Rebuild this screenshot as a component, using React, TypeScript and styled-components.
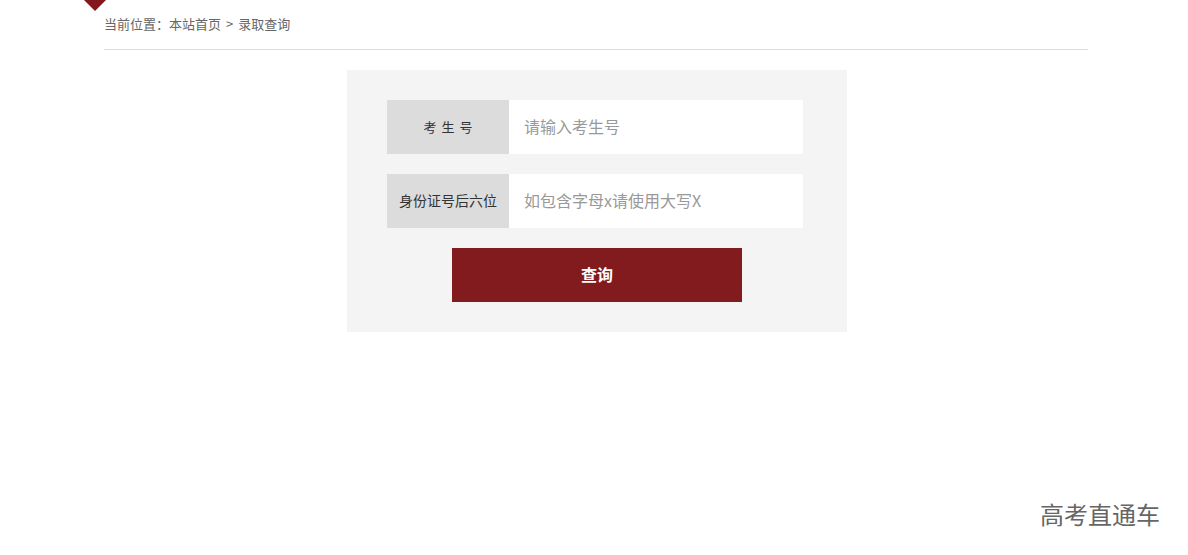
import styled, { createGlobalStyle } from "styled-components";

const GlobalStyle = createGlobalStyle`
  html, body {
    margin: 0;
    padding: 0;
    background: #fff;
    font-family: "Noto Sans CJK SC", "Noto Sans", sans-serif;
  }
`;

const Page = styled.div`
  width: 984px;
  margin-left: 104px;
  min-height: 555px;
`;

const Marker = styled.div`
  width: 0;
  height: 0;
  margin-left: -20px;
  border-left: 11px solid transparent;
  border-right: 11px solid transparent;
  border-top: 11px solid #83191c;
`;

const Crumbs = styled.div`
  height: 28px;
  line-height: 26px;
  padding-bottom: 10px;
  border-bottom: 1px solid #dddddd;
  font-size: 13px;
  color: #666;
`;

const Sep = styled.span`
  margin: 0 5px;
`;

const Panel = styled.form`
  width: 500px;
  box-sizing: border-box;
  margin: 20px 0 0 243px;
  padding: 30px 44px 30px 40px;
  background: #f4f4f4;
  display: flex;
  flex-direction: column;
  gap: 20px;
`;

const Row = styled.div`
  display: flex;
  height: 54px;
`;

const Label = styled.label<{ $spaced?: boolean }>`
  width: 122px;
  box-sizing: border-box;
  flex-shrink: 0;
  background: #dcdcdc;
  display: flex;
  align-items: center;
  justify-content: center;
  padding-bottom: 2px;
  padding-left: ${(p) => (p.$spaced ? "5px" : "0")};
  font-size: ${(p) => (p.$spaced ? "13px" : "14px")};
  letter-spacing: ${(p) => (p.$spaced ? "5px" : "0")};
  color: #333;
`;

const Input = styled.input`
  flex: 1;
  min-width: 0;
  border: none;
  outline: none;
  background: #fff;
  padding: 0 15px 3px;
  font-family: inherit;
  font-size: 16px;
  color: #333;
  &::placeholder {
    color: #999;
  }
`;

const Submit = styled.button`
  align-self: center;
  width: 290px;
  height: 54px;
  margin-left: 4px;
  padding-bottom: 4px;
  border: none;
  background: #821b1e;
  color: #fff;
  font-family: inherit;
  font-size: 16px;
  font-weight: bold;
  cursor: pointer;
`;

const Watermark = styled.div`
  position: absolute;
  right: 28px;
  top: 496px;
  font-size: 24px;
  color: #666;
  text-shadow: 0 0 2px #fff;
`;

export default function App() {
  return (
    <>
      <GlobalStyle />
      <Page>
        <Marker />
        <Crumbs>
          当前位置：本站首页<Sep>&gt;</Sep>录取查询
        </Crumbs>
        <Panel onSubmit={(e) => e.preventDefault()}>
          <Row>
            <Label $spaced>考生号</Label>
            <Input placeholder="请输入考生号" />
          </Row>
          <Row>
            <Label>身份证号后六位</Label>
            <Input placeholder="如包含字母x请使用大写X" />
          </Row>
          <Submit type="submit">查询</Submit>
        </Panel>
      </Page>
      <Watermark>高考直通车</Watermark>
    </>
  );
}
